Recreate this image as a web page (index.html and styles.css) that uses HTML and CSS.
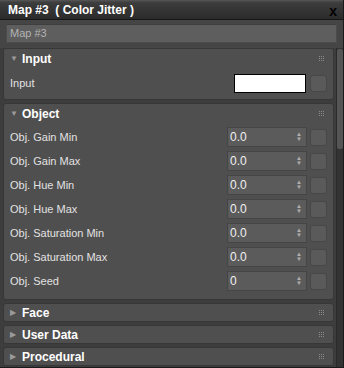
FILE: index.html
```html
<!DOCTYPE html>
<html lang="en">
<head>
    <meta charset="UTF-8">
    <title>Map #3 ( Color Jitter )</title>
    <link rel="stylesheet" href="styles.css">
</head>
<body>
    <div class="window">
        <div class="title-bar">
            <span class="title">Map #3&nbsp; ( Color Jitter )</span>
            <span class="close">x</span>
        </div>
        <div class="name-row">
            <div class="name-field">Map #3</div>
        </div>
        <div class="content">
            <div class="panels">
                <div class="panel">
                    <div class="panel-header">
                        <span class="arrow">&#9660;</span>
                        <span class="panel-title">Input</span>
                        <svg class="grip" width="6" height="6" viewBox="0 0 6 6"><g fill="#8a8a8a"><rect x="0" y="0" width="1" height="1"/><rect x="2" y="0" width="1" height="1"/><rect x="4" y="0" width="1" height="1"/><rect x="0" y="2" width="1" height="1"/><rect x="2" y="2" width="1" height="1"/><rect x="4" y="2" width="1" height="1"/><rect x="0" y="4" width="1" height="1"/><rect x="2" y="4" width="1" height="1"/><rect x="4" y="4" width="1" height="1"/></g></svg>
                    </div>
                    <div class="panel-body input-body">
                        <div class="row">
                            <span class="label">Input</span>
                            <div class="swatch"></div>
                            <div class="map-btn"></div>
                        </div>
                    </div>
                </div>

                <div class="panel">
                    <div class="panel-header">
                        <span class="arrow">&#9660;</span>
                        <span class="panel-title">Object</span>
                        <svg class="grip" width="6" height="6" viewBox="0 0 6 6"><g fill="#8a8a8a"><rect x="0" y="0" width="1" height="1"/><rect x="2" y="0" width="1" height="1"/><rect x="4" y="0" width="1" height="1"/><rect x="0" y="2" width="1" height="1"/><rect x="2" y="2" width="1" height="1"/><rect x="4" y="2" width="1" height="1"/><rect x="0" y="4" width="1" height="1"/><rect x="2" y="4" width="1" height="1"/><rect x="4" y="4" width="1" height="1"/></g></svg>
                    </div>
                    <div class="panel-body">
                        <div class="row">
                            <span class="label">Obj. Gain Min</span>
                            <div class="spinner"><span>0.0</span><span class="spin-arrows">&#9650;<br>&#9660;</span></div>
                            <div class="map-btn"></div>
                        </div>
                        <div class="row">
                            <span class="label">Obj. Gain Max</span>
                            <div class="spinner"><span>0.0</span><span class="spin-arrows">&#9650;<br>&#9660;</span></div>
                            <div class="map-btn"></div>
                        </div>
                        <div class="row">
                            <span class="label">Obj. Hue Min</span>
                            <div class="spinner"><span>0.0</span><span class="spin-arrows">&#9650;<br>&#9660;</span></div>
                            <div class="map-btn"></div>
                        </div>
                        <div class="row">
                            <span class="label">Obj. Hue Max</span>
                            <div class="spinner"><span>0.0</span><span class="spin-arrows">&#9650;<br>&#9660;</span></div>
                            <div class="map-btn"></div>
                        </div>
                        <div class="row">
                            <span class="label">Obj. Saturation Min</span>
                            <div class="spinner"><span>0.0</span><span class="spin-arrows">&#9650;<br>&#9660;</span></div>
                            <div class="map-btn"></div>
                        </div>
                        <div class="row">
                            <span class="label">Obj. Saturation Max</span>
                            <div class="spinner"><span>0.0</span><span class="spin-arrows">&#9650;<br>&#9660;</span></div>
                            <div class="map-btn"></div>
                        </div>
                        <div class="row">
                            <span class="label">Obj. Seed</span>
                            <div class="spinner"><span>0</span><span class="spin-arrows">&#9650;<br>&#9660;</span></div>
                            <div class="map-btn"></div>
                        </div>
                    </div>
                </div>

                <div class="panel closed">
                    <div class="panel-header">
                        <span class="arrow">&#9654;</span>
                        <span class="panel-title">Face</span>
                        <svg class="grip" width="6" height="6" viewBox="0 0 6 6"><g fill="#8a8a8a"><rect x="0" y="0" width="1" height="1"/><rect x="2" y="0" width="1" height="1"/><rect x="4" y="0" width="1" height="1"/><rect x="0" y="2" width="1" height="1"/><rect x="2" y="2" width="1" height="1"/><rect x="4" y="2" width="1" height="1"/><rect x="0" y="4" width="1" height="1"/><rect x="2" y="4" width="1" height="1"/><rect x="4" y="4" width="1" height="1"/></g></svg>
                    </div>
                </div>
                <div class="panel closed">
                    <div class="panel-header">
                        <span class="arrow">&#9654;</span>
                        <span class="panel-title">User Data</span>
                        <svg class="grip" width="6" height="6" viewBox="0 0 6 6"><g fill="#8a8a8a"><rect x="0" y="0" width="1" height="1"/><rect x="2" y="0" width="1" height="1"/><rect x="4" y="0" width="1" height="1"/><rect x="0" y="2" width="1" height="1"/><rect x="2" y="2" width="1" height="1"/><rect x="4" y="2" width="1" height="1"/><rect x="0" y="4" width="1" height="1"/><rect x="2" y="4" width="1" height="1"/><rect x="4" y="4" width="1" height="1"/></g></svg>
                    </div>
                </div>
                <div class="panel closed">
                    <div class="panel-header">
                        <span class="arrow">&#9654;</span>
                        <span class="panel-title">Procedural</span>
                        <svg class="grip" width="6" height="6" viewBox="0 0 6 6"><g fill="#8a8a8a"><rect x="0" y="0" width="1" height="1"/><rect x="2" y="0" width="1" height="1"/><rect x="4" y="0" width="1" height="1"/><rect x="0" y="2" width="1" height="1"/><rect x="2" y="2" width="1" height="1"/><rect x="4" y="2" width="1" height="1"/><rect x="0" y="4" width="1" height="1"/><rect x="2" y="4" width="1" height="1"/><rect x="4" y="4" width="1" height="1"/></g></svg>
                    </div>
                </div>
            </div>
            <div class="scrollbar">
                <div class="thumb"></div>
            </div>
        </div>
    </div>
</body>
</html>
```

FILE: styles.css
```css
body {
    margin: 0;
    background-color: #444;
    font-family: "Liberation Sans", Arial, sans-serif;
    overflow: hidden;
}
.window {
    width: 344px;
    height: 368px;
    box-sizing: border-box;
    background-color: #454545;
    border-right: 1px solid #1a1a1a;
    border-bottom: 1px solid #1a1a1a;
    overflow: hidden;
}
.title-bar {
    height: 19px;
    display: flex;
    align-items: center;
    justify-content: space-between;
    padding: 0 6px 0 8px;
    background: linear-gradient(#5a5a5a 0, #4a4a4a 1px, #3c3c3c 3px, #2b2b2b 100%);
    border-bottom: 1px solid #161616;
}
.title {
    color: #fff;
    font-weight: bold;
    font-size: 12px;
}
.close {
    color: #000;
    font-weight: bold;
    font-size: 14px;
    line-height: 1;
    margin-top: 2px;
}
.name-row {
    padding: 4px 6px 0 6px;
}
.name-field {
    height: 19px;
    box-sizing: border-box;
    background-color: #5e5e5e;
    border: 1px solid #4c4c4c;
    border-top-color: #3e3e3e;
    color: #b4b4b4;
    font-size: 11px;
    line-height: 17px;
    padding-left: 3px;
}
.content {
    display: flex;
    margin-top: 5px;
    background-color: #3d3d3d;
    height: 320px;
}
.panels {
    width: 331px;
    margin-left: 3px;
    display: flex;
    flex-direction: column;
    gap: 3px;
}
.panel {
    background-color: #4f4f4f;
    border: 1px solid #373737;
    border-radius: 3px;
}
.panel-header {
    height: 19px;
    display: flex;
    align-items: center;
    padding-left: 6px;
    padding-right: 8px;
}
.closed .panel-header {
    height: 17px;
}
.arrow {
    color: #9a9a9a;
    font-size: 8px;
    width: 12px;
}
.panel-title {
    color: #fff;
    font-weight: bold;
    font-size: 12px;
    flex: 1;
}
.grip {
    display: block;
}
.panel-body {
    padding: 4px 6px 8px 6px;
    display: flex;
    flex-direction: column;
    gap: 4px;
}
.input-body {
    padding-top: 5px;
    padding-bottom: 6px;
}
.row {
    height: 20px;
    display: flex;
    align-items: center;
}
.label {
    flex: 1;
    color: #e2e2e2;
    font-size: 11px;
}
.swatch {
    width: 70px;
    height: 17px;
    background-color: #fff;
    border: 1px solid #000;
    margin-right: 4px;
}
.spinner {
    width: 76px;
    height: 18px;
    background-color: #5b5b5b;
    border: 1px solid #454545;
    display: flex;
    align-items: center;
    justify-content: space-between;
    padding-left: 2px;
    color: #f0f0f0;
    font-size: 12px;
    margin-right: 3px;
}
.spin-arrows {
    color: #b0b0b0;
    font-size: 6px;
    line-height: 5px;
    margin-right: 4px;
    text-align: center;
}
.map-btn {
    width: 15px;
    height: 15px;
    background-color: #5a5a5a;
    border: 1px solid #474747;
    border-radius: 3px;
}
.scrollbar {
    width: 6px;
    margin-left: 2px;
    background-color: #333;
    border-left: 1px solid #2a2a2a;
}
.thumb {
    height: 100px;
    margin-top: 1px;
    background-color: #555;
    border-radius: 2px;
}
```
